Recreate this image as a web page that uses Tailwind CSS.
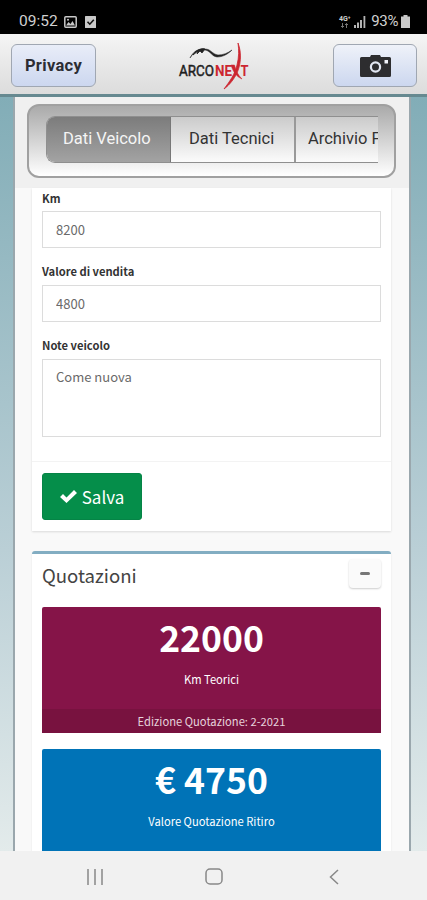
<!DOCTYPE html>
<html lang="it">

<head>
    <meta charset="UTF-8">
    <meta name="viewport" content="width=device-width, initial-scale=1.0">
    <title>ArcoNext</title>
    <script src="https://cdn.jsdelivr.net/npm/@tailwindcss/browser@4"></script>
</head>

<body class="h-[900px] w-[427px] overflow-hidden flex flex-col bg-[#f1f1f1] font-['Noto_Sans_CJK_JP',sans-serif] text-[#333]">
    <!-- Status bar -->
    <div class="h-[34px] shrink-0 bg-black flex items-center pt-[9px] pl-[19px] pr-[17px] font-[Roboto,sans-serif] text-[#d0d0d0]">
        <span class="text-[15.5px] leading-none w-[45px]">09:52</span>
        <svg class="w-[13px] h-3" viewBox="0 0 13 12" fill="none">
            <rect x="0.8" y="0.8" width="11.4" height="10.4" rx="1" stroke="#c8c8c8" stroke-width="1.5" />
            <path d="M2 9.5L4.5 6L6.5 8L8.5 5L11 9.5Z" fill="#c8c8c8" />
            <circle cx="4" cy="3.8" r="1" fill="#c8c8c8" />
        </svg>
        <svg class="w-[11px] h-3 ml-2" viewBox="0 0 11 12" fill="none">
            <rect width="11" height="12" rx="0.5" fill="#c8c8c8" />
            <path d="M2.5 5.8L4.8 8.2L8.8 3.8" stroke="#111" stroke-width="1.6" />
        </svg>
        <div class="ml-auto flex items-center">
            <div class="flex flex-col items-center w-[13px]">
                <span class="text-[7px] leading-[7px] font-bold">4G⁺</span>
                <svg class="w-[9px] h-[5px]" viewBox="0 0 9 5" fill="none" stroke="#777" stroke-width="1">
                    <path d="M2.5 0V4.5M1 3L2.5 4.5L4 3M6.5 5V0.5M5 2L6.5 0.5L8 2" />
                </svg>
            </div>
            <svg class="w-3 h-3 ml-[3px]" viewBox="0 0 12 12" fill="#b4b4b4">
                <rect x="0" y="9" width="2" height="3" />
                <rect x="3" y="6.5" width="2" height="5.5" />
                <rect x="6" y="4" width="2" height="8" />
                <rect x="9.5" y="0" width="1.8" height="12" />
            </svg>
            <span class="text-[15px] leading-none ml-[5px] tracking-[-0.4px]">93%</span>
            <svg class="w-[9px] h-[13px] ml-[3px]" viewBox="0 0 9 13" fill="#c8c8c8">
                <path d="M2.5 0H6.5V1.5H9V13H0V1.5H2.5Z" />
            </svg>
        </div>
    </div>

    <!-- Header -->
    <header class="h-[63px] shrink-0 flex items-start justify-between pt-[10px] pl-[11px] pr-[10px] bg-linear-to-b from-[#f5f5f5] to-[#dcdcdc] border-b-3 border-[#668990]">
        <button class="w-[85px] h-[43px] rounded-md border border-[#a0a7b2] bg-linear-to-b from-[#e9edf8] to-[#ccd7ef] font-[Roboto,sans-serif] font-bold text-[16.5px] tracking-[0.3px] pt-[2px] text-[#2b2d33]">Privacy</button>
        <svg class="w-[80px] h-[52px] -mt-1.5 -ml-[1px]" viewBox="0 0 80 52">
            <path d="M16 20C20 14 25 11 31 12C37 13 37 18 43 19C49 19 54 16 58 12C54 15 49 17 44 17C38 16 37 11 31 11C24 10 19 14 16 20Z" fill="#222" stroke="#222" stroke-width="0.5" />
            <path d="M19 17C22 13 26 10 31 11L28 15L26 13L23 16L24 13Z" fill="#222" stroke="#222" stroke-width="0.8" />
            <text x="5" y="37.5" class="font-[Roboto,sans-serif] text-[15px]" fill="#1f1f1f" stroke="#1f1f1f" stroke-width="0.5" textLength="35" lengthAdjust="spacingAndGlyphs">ARCO</text>
            <text x="41" y="37.5" class="font-[Roboto,sans-serif] font-bold text-[14.5px]" fill="#cc2630" textLength="17" lengthAdjust="spacingAndGlyphs">NE</text>
            <text x="66.5" y="37.5" class="font-[Roboto,sans-serif] font-bold text-[14.5px]" fill="#cc2630" textLength="8" lengthAdjust="spacingAndGlyphs">T</text>
            <path d="M64 5C68 15 67 28 62 37C58 44 54 48 50 51C56 43 61 36 63 27C65 19 65 12 64 5Z" fill="#cc2630" stroke="#cc2630" stroke-width="0.8" />
            <path d="M57 27L60.500 27C62 33 64 37 68 41C63 39 59 34 57 27Z" fill="#cc2630" stroke="#cc2630" stroke-width="0.5" />
        </svg>
        <button class="w-[84px] h-[43px] rounded-md border border-[#a0a7b2] bg-linear-to-b from-[#eff2f9] to-[#ccd7ef] flex items-center justify-center">
            <svg class="w-[31px] h-[22px]" viewBox="0 0 31 22">
                <path d="M1.5 2H10L11 0H20L21 2H29.500Q31 2 31 3.500V20.500Q31 22 29.500 22H1.500Q0 22 0 20.500V3.500Q0 2 1.500 2Z" fill="#2d2d2f" />
                <circle cx="15.500" cy="12" r="4.600" fill="#2d2d2f" stroke="#e2e7f2" stroke-width="2.200" />
                <rect x="24.500" y="5" width="3.500" height="3.500" fill="#f2f4fa" />
            </svg>
        </button>
    </header>

    <!-- Page -->
    <main class="h-[754px] shrink-0 overflow-hidden bg-linear-to-b from-[#82adb7] via-[#bacfd6] via-60% to-[#e3ebeb] pl-[13px] pr-[16px]">
        <div class="h-full bg-[#f9f9f9] border-x-2 border-[#9aa7ad] flex flex-col">
            <!-- Tabs -->
            <div class="h-[91px] shrink-0 bg-[#f0f0f0] pt-[7px] pl-3 pr-[13px]">
                <div class="h-[74px] rounded-xl border-2 border-[#a0a0a0] bg-linear-to-b from-[#aaaaaa] to-white pt-[10px] pl-[17px] pr-4">
                    <nav class="h-[47px] flex overflow-hidden rounded-l-[9px] border border-r-0 border-[#8f8f8f] font-[Roboto,sans-serif] text-[16.5px] whitespace-nowrap leading-[43px] bg-linear-to-b from-[#cbcbcb] to-[#fbfbfb] text-[#333]">
                        <a class="w-[124px] shrink-0 pl-4 bg-linear-to-b from-[#7c7c7c] to-[#a3a3a3] border-r border-[#777] text-[#f5f5f5]">Dati Veicolo</a>
                        <a class="w-[125px] shrink-0 pl-[18px] border-r-2 border-[#999]">Dati Tecnici</a>
                        <a class="shrink-0 pl-[12px]">Archivio Foto</a>
                    </nav>
                </div>
            </div>

            <div class="pl-[17px] pr-[18px]">
                <!-- Form -->
                <form class="h-[343px] bg-white shadow-[0_1px_2px_rgba(0,0,0,0.12)] flex flex-col">
                    <div class="px-[10px] h-[274px] border-b border-[#f3f3f3] text-[11.2px]">
                        <label class="block h-[23px] leading-[20px] font-bold">Km</label>
                        <input class="block w-full h-[37px] border border-[#dcdcdc] px-[13px] text-[13px] text-[#6a6a6a]" type="text" value="8200">
                        <label class="block h-[37px] pt-[13px] leading-[20px] font-bold">Valore di vendita</label>
                        <input class="block w-full h-[37px] border border-[#dcdcdc] px-[13px] text-[13px] text-[#6a6a6a]" type="text" value="4800">
                        <label class="block h-[37px] pt-[13px] leading-[20px] font-bold">Note veicolo</label>
                        <textarea class="block w-full h-[78px] border border-[#dcdcdc] px-[13px] py-[8px] text-[13px] leading-[18px] text-[#6a6a6a] resize-none">Come nuova</textarea>
                    </div>
                    <div class="px-[10px] pt-[11px]">
                        <button class="w-[100px] h-[47px] rounded-[3px] bg-[#058e4a] border border-[#058446] text-white text-[17px] flex items-center justify-center gap-[5px]" type="button">
                            <svg class="w-[17px] h-[13px]" viewBox="0 0 17 13">
                                <path d="M0 7L3 4L6.500 7.500L14 0L17 3L6.500 13Z" fill="#fff" />
                            </svg>
                            Salva
                        </button>
                    </div>
                </form>

                <!-- Quotazioni -->
                <section class="mt-[20px] h-[400px] bg-white border-t-3 border-[#82adc2] rounded-t-[3px] shadow-[0_1px_2px_rgba(0,0,0,0.1)] px-[10px]">
                    <div class="h-[53px] flex justify-between">
                        <h3 class="text-[18.6px] leading-[42px] text-[#444]">Quotazioni</h3>
                        <button class="mt-[5px] w-[32px] h-[29px] bg-[#fafafa] rounded-sm shadow-[0_1px_2px_rgba(0,0,0,0.2)] flex items-center justify-center">
                            <span class="w-[10px] h-[3px] rounded-full bg-[#777]"></span>
                        </button>
                    </div>
                    <div class="h-[126px] rounded-[2px] bg-[#851448] text-white text-center text-[11.2px] flex flex-col">
                        <strong class="text-[35.5px] leading-[40px] pt-[10px] h-[62px]">22000</strong>
                        <span class="leading-[20px]">Km Teorici</span>
                        <span class="mt-auto h-[24px] leading-[24px] bg-[#78123f] text-[#e6d3dc]">Edizione Quotazione: 2-2021</span>
                    </div>
                    <div class="mt-4 h-[126px] rounded-[2px] bg-[#0073b7] text-white text-center text-[11.2px] flex flex-col">
                        <strong class="text-[35.5px] leading-[40px] pt-[10px] h-[62px]">€ 4750</strong>
                        <span class="leading-[20px]">Valore Quotazione Ritiro</span>
                    </div>
                </section>
            </div>
        </div>
    </main>

    <!-- Android navigation -->
    <footer class="flex-1 bg-[#f1f1f1] flex items-center pt-[2px] pl-[87px]">
        <svg class="w-[16px] h-[16px]" viewBox="0 0 16 16" stroke="#888" stroke-width="1.500">
            <path d="M1 0V16M8 0V16M15 0V16" />
        </svg>
        <svg class="w-[18px] h-[17px] ml-[102px]" viewBox="0 0 18 17" fill="none" stroke="#888" stroke-width="1.500">
            <rect x="1" y="1" width="16" height="15" rx="4" />
        </svg>
        <svg class="w-[10px] h-[16px] ml-[106px]" viewBox="0 0 10 16" fill="none" stroke="#888" stroke-width="1.500">
            <path d="M9 1L1.500 8L9 15" />
        </svg>
    </footer>
</body>

</html>
